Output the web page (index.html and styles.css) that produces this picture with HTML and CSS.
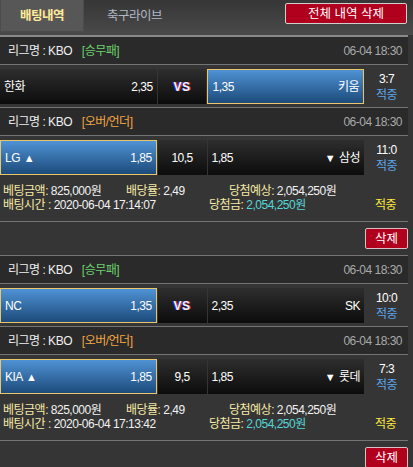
FILE: index.html
```html
<!DOCTYPE html>
<html lang="ko">
<head>
<meta charset="utf-8">
<link rel="stylesheet" href="styles.css">
</head>
<body>
<div class="tabbar">
  <div class="tab active">배팅내역</div>
  <div class="tab">축구라이브</div>
  <button class="delall">전체 내역 삭제</button>
</div>
<div class="list">
  <div class="match">
    <div class="mhead"><span class="league">리그명 : KBO <span class="type win">[승무패]</span></span><span class="date">06-04 18:30</span></div>
    <div class="mrow">
      <div class="cell team"><span>한화</span><span>2,35</span></div>
      <div class="cell mid"><span class="vs">VS</span></div>
      <div class="cell team sel"><span>1,35</span><span>키움</span></div>
      <div class="score"><span>3:7</span><span class="hit">적중</span></div>
    </div>
  </div>
  <div class="match">
    <div class="mhead"><span class="league">리그명 : KBO <span class="type ou">[오버/언더]</span></span><span class="date">06-04 18:30</span></div>
    <div class="mrow">
      <div class="cell team sel"><span>LG <span class="tri">▲</span></span><span>1,85</span></div>
      <div class="cell mid"><span>10,5</span></div>
      <div class="cell team"><span>1,85</span><span><span class="tri">▼</span> 삼성</span></div>
      <div class="score"><span>11:0</span><span class="hit">적중</span></div>
    </div>
    <div class="betinfo">
      <div class="bline">
        <span class="c1"><span class="lb">베팅금액:</span> 825,000원</span>
        <span class="c2"><span class="lb">배당률:</span> 2,49</span>
        <span class="c3"><span class="lb">당첨예상:</span> 2,054,250원</span>
      </div>
      <div class="bline">
        <span class="d1"><span class="lb">배팅시간 :</span> 2020-06-04 17:14:07</span>
        <span class="d2"><span class="lb">당첨금:</span> <span class="win-amt">2,054,250원</span></span>
        <span class="d3">적중</span>
      </div>
    </div>
    <div class="delrow"><button class="del">삭제</button></div>
  </div>
  <div class="match">
    <div class="mhead"><span class="league">리그명 : KBO <span class="type win">[승무패]</span></span><span class="date">06-04 18:30</span></div>
    <div class="mrow">
      <div class="cell team sel"><span>NC</span><span>1,35</span></div>
      <div class="cell mid"><span class="vs">VS</span></div>
      <div class="cell team"><span>2,35</span><span>SK</span></div>
      <div class="score"><span>10:0</span><span class="hit">적중</span></div>
    </div>
  </div>
  <div class="match">
    <div class="mhead"><span class="league">리그명 : KBO <span class="type ou">[오버/언더]</span></span><span class="date">06-04 18:30</span></div>
    <div class="mrow">
      <div class="cell team sel"><span>KIA <span class="tri">▲</span></span><span>1,85</span></div>
      <div class="cell mid"><span>9,5</span></div>
      <div class="cell team"><span>1,85</span><span><span class="tri">▼</span> 롯데</span></div>
      <div class="score"><span>7:3</span><span class="hit">적중</span></div>
    </div>
    <div class="betinfo">
      <div class="bline">
        <span class="c1"><span class="lb">베팅금액:</span> 825,000원</span>
        <span class="c2"><span class="lb">배당률:</span> 2,49</span>
        <span class="c3"><span class="lb">당첨예상:</span> 2,054,250원</span>
      </div>
      <div class="bline">
        <span class="d1"><span class="lb">배팅시간 :</span> 2020-06-04 17:13:42</span>
        <span class="d2"><span class="lb">당첨금:</span> <span class="win-amt">2,054,250원</span></span>
        <span class="d3">적중</span>
      </div>
    </div>
    <div class="delrow"><button class="del">삭제</button></div>
  </div>
</div>
</body>
</html>
```
FILE: styles.css
```css
* { box-sizing: border-box; }
html, body { margin: 0; padding: 0; }
body {
  width: 413px;
  height: 467px;
  overflow: hidden;
  background: #353535;
  color: #f2f2f2;
  font-family: "Liberation Sans", "Noto Sans CJK KR", sans-serif;
  font-size: 12px;
  letter-spacing: -0.5px;
  line-height: 14px;
}
.tabbar {
  height: 35px;
  display: flex;
  align-items: flex-start;
  background: linear-gradient(#363636, #4a4a4a);
}
.tab {
  height: 32px;
  display: flex;
  align-items: center;
  justify-content: center;
  font-size: 12.5px;
  color: #b0b8c6;
}
.tab.active {
  width: 84px;
  background: #575757;
  border: 1px solid #4c4c4c;
  border-top: none;
  color: #f8f09c;
  font-weight: bold;
  text-shadow: 1px 0 0 rgba(200, 60, 60, 0.35);
}
.tab:not(.active) { width: 101px; }
.delall {
  margin: 3px 6px 0 auto;
  width: 122px;
  height: 21px;
  padding: 0;
  background: #b1001e;
  border: 1px solid #cfcfcf;
  border-radius: 2px;
  color: #fff;
  font-family: "Liberation Sans", "Noto Sans CJK KR", sans-serif;
  font-size: 12.5px;
  line-height: 18px;
}
.list {
  width: 408px;
  border-top: 2px solid #8a8a8a;
}
.match { border-bottom: 1px solid #747474; }
.mhead {
  height: 28px;
  display: flex;
  align-items: center;
  justify-content: space-between;
  padding: 1px 6px 0 8px;
  background: #2a2a2a;
  border-bottom: 1px solid #747474;
}
.league { color: #f0f0f0; }
.type { margin-left: 7px; }
.type.win { color: #6cd06c; }
.type.ou { color: #f2a443; }
.date { color: #a9a9a9; }
.mrow {
  display: flex;
  gap: 1px;
  padding: 4px 0 3px;
}
.cell {
  height: 35px;
  display: flex;
  align-items: center;
  background: linear-gradient(#2e2e2e, #0c0c0c);
  color: #fff;
}
.team {
  width: 157px;
  justify-content: space-between;
  padding: 0 4px 0 4px;
}
.team.sel {
  background: linear-gradient(#4f92d4, #1c4b7b);
  border: 1px solid #ebc56a;
}
.mid {
  width: 49px;
  justify-content: center;
}
.vs {
  font-weight: bold;
  font-size: 12px;
  letter-spacing: 0.5px;
  color: #f4f4ff;
  text-shadow: -1px 0 0 #2030d8, 1px 0 0 #e02424;
}
.tri { font-size: 11px; margin: 0 1px; }
.score {
  width: 43px;
  height: 35px;
  display: flex;
  flex-direction: column;
  align-items: center;
  justify-content: center;
  line-height: 16px;
  color: #fff;
}
.hit { color: #5ba4ea; }
.betinfo { padding: 6px 0 9px 3px; }
.bline { display: flex; white-space: nowrap; }
.lb { color: #f5eaa5; }
.c1 { width: 123px; }
.c2 { width: 103px; }
.d1 { width: 206px; }
.d2 { width: 166px; }
.d3 { color: #ffe93c; }
.win-amt { color: #55d6d6; }
.delrow {
  display: flex;
  justify-content: flex-end;
  padding: 6px 0;
  border-top: 1px solid #747474;
}
.del {
  width: 43px;
  height: 21px;
  padding: 0;
  background: #b1001e;
  border: 1px solid #d8c0c4;
  border-radius: 2px;
  color: #fff;
  font-family: "Liberation Sans", "Noto Sans CJK KR", sans-serif;
  font-size: 12.5px;
  line-height: 18px;
}
```
